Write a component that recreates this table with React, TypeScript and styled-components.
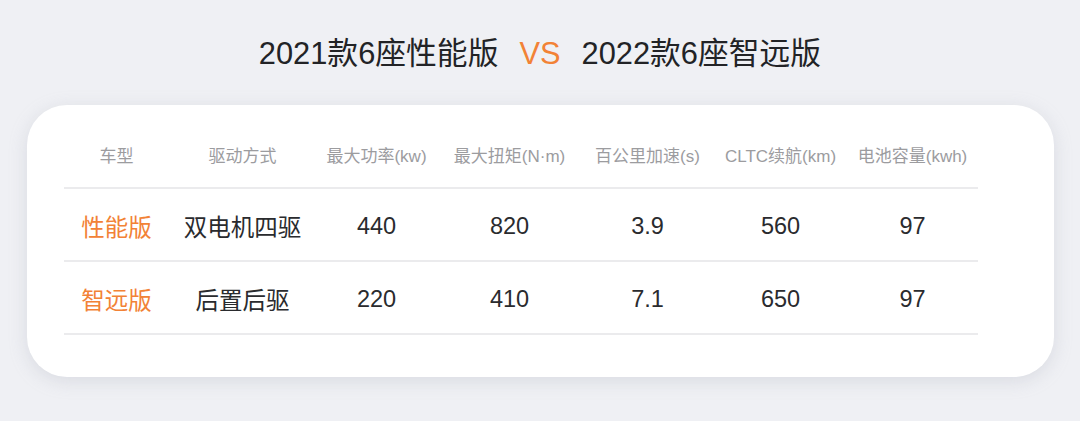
import React from 'react';
import styled, { createGlobalStyle } from 'styled-components';

const GlobalStyle = createGlobalStyle`
  html, body {
    margin: 0;
    padding: 0;
    background: #eff0f4;
  }
  body {
    font-family: "Liberation Sans", "Noto Sans CJK SC", sans-serif;
  }
`;

const Page = styled.div`
  width: 1080px;
  height: 421px;
  box-sizing: border-box;
  padding-top: 32px;
  display: flex;
  flex-direction: column;
  align-items: center;
  background: #eff0f4;
  overflow: hidden;
`;

const Title = styled.h1`
  margin: 0;
  height: 44px;
  display: flex;
  align-items: baseline;
  gap: 21px;
  font-size: 30.8px;
  line-height: 44px;
  font-weight: 400;
  color: #222326;
`;

const Vs = styled.span`
  color: #f28236;
`;

const Card = styled.div`
  margin-top: 29px;
  width: 1027px;
  height: 272px;
  box-sizing: border-box;
  padding: 25px 0 0 37px;
  background: #ffffff;
  border-radius: 40px;
  box-shadow: 0 4px 18px rgba(160, 165, 180, 0.28);
`;

const Table = styled.div`
  width: 914px;
`;

const Row = styled.div<{ $head?: boolean }>`
  display: grid;
  grid-template-columns: 106px 146px 122px 144px 132px 134px 130px;
  box-sizing: border-box;
  height: ${p => (p.$head ? 59 : 73)}px;
  padding: ${p => (p.$head ? '0 0 9px' : '3px 0 0')};
  align-items: center;
  border-bottom: 2px solid #ebebed;
`;

const HeadCell = styled.div`
  text-align: center;
  font-size: 17px;
  color: #9c9c9f;
  white-space: nowrap;
`;

const Cell = styled.div<{ $accent?: boolean }>`
  text-align: center;
  font-size: 23.5px;
  color: ${p => (p.$accent ? '#f28236' : '#2a2b2e')};
  white-space: nowrap;
`;

const headers = ['车型', '驱动方式', '最大功率(kw)', '最大扭矩(N·m)', '百公里加速(s)', 'CLTC续航(km)', '电池容量(kwh)'];

const rows = [
  ['性能版', '双电机四驱', '440', '820', '3.9', '560', '97'],
  ['智远版', '后置后驱', '220', '410', '7.1', '650', '97'],
];

const App = () => (
  <>
    <GlobalStyle />
    <Page>
      <Title>
        <span>2021款6座性能版</span>
        <Vs>VS</Vs>
        <span>2022款6座智远版</span>
      </Title>
      <Card>
        <Table>
          <Row $head>
            {headers.map(h => (
              <HeadCell key={h}>{h}</HeadCell>
            ))}
          </Row>
          {rows.map(r => (
            <Row key={r[0]}>
              {r.map((v, i) => (
                <Cell key={i} $accent={i === 0}>{v}</Cell>
              ))}
            </Row>
          ))}
        </Table>
      </Card>
    </Page>
  </>
);

export default App;
